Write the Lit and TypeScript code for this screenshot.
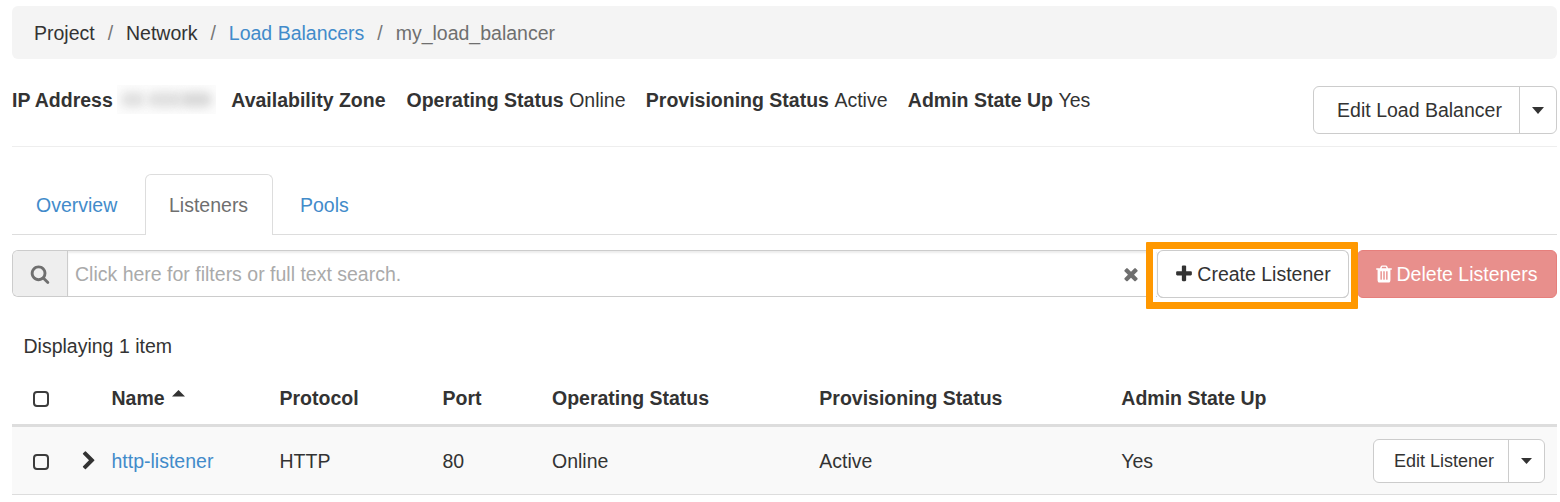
import { LitElement, html, css, svg } from "lit";
import { customElement, property } from "lit/decorators.js";

const ICONS: Record<string, string> = {
  search:
    "M1216 832q0-185-131.5-316.5t-316.5-131.5-316.5 131.5-131.5 316.5 131.5 316.5 316.5 131.5 316.5-131.5 131.5-316.5zm512 832q0 52-38 90t-90 38q-54 0-90-38l-343-342q-179 124-399 124-143 0-273.5-55.5t-225-150-150-225-55.5-273.5 55.5-273.5 150-225 225-150 273.5-55.5 273.5 55.5 225 150 150 225 55.5 273.5q0 220-124 399l343 343q37 37 37 90z",
  times:
    "M1490 1322q0 40-28 68l-136 136q-28 28-68 28t-68-28l-294-294-294 294q-28 28-68 28t-68-28l-136-136q-28-28-28-68t28-68l294-294-294-294q-28-28-28-68t28-68l136-136q28-28 68-28t68 28l294 294 294-294q28-28 68-28t68 28l136 136q28 28 28 68t-28 68l-294 294 294 294q28 28 28 68z",
  plus:
    "M1600 736v192q0 40-28 68t-68 28h-416v416q0 40-28 68t-68 28h-192q-40 0-68-28t-28-68v-416h-416q-40 0-68-28t-28-68v-192q0-40 28-68t68-28h416v-416q0-40 28-68t68-28h192q40 0 68 28t28 68v416h416q40 0 68 28t28 68z",
  trash:
    "M704 1376v-704q0-14-9-23t-23-9h-64q-14 0-23 9t-9 23v704q0 14 9 23t23 9h64q14 0 23-9t9-23zm256 0v-704q0-14-9-23t-23-9h-64q-14 0-23 9t-9 23v704q0 14 9 23t23 9h64q14 0 23-9t9-23zm256 0v-704q0-14-9-23t-23-9h-64q-14 0-23 9t-9 23v704q0 14 9 23t23 9h64q14 0 23-9t9-23zm-544-992h448l-48-117q-7-9-17-11h-317q-10 2-17 11zm928 32v64q0 14-9 23t-23 9h-96v948q0 83-47 143.5t-113 60.5h-832q-66 0-113-58.5t-47-141.5v-952h-96q-14 0-23-9t-9-23v-64q0-14 9-23t23-9h309l70-167q15-37 54-63t79-26h320q40 0 79 26t54 63l70 167h309q14 0 23 9t9 23z",
  chevron:
    "M1363 877l-742 742q-19 19-45 19t-45-19l-166-166q-19-19-19-45t19-45l531-531-531-531q-19-19-19-45t19-45l166-166q19-19 45-19t45 19l742 742q19 19 19 45t-19 45z",
};

@customElement("fa-icon")
export class FaIcon extends LitElement {
  @property() name = "search";
  static styles = css`
    :host { display: block; flex: none; width: 20px; height: 20px; }
    svg { display: block; width: 100%; height: 100%; }
  `;
  render() {
    return html`<svg viewBox="0 0 1792 1792" fill="currentColor">${svg`<path d=${ICONS[this.name]}></path>`}</svg>`;
  }
}

@customElement("split-button")
export class SplitButton extends LitElement {
  @property() label = "";
  static styles = css`
    :host { display: flex; box-sizing: border-box; border: 1px solid #ccc; border-radius: 6px; background: #fff; color: #333; }
    .label { flex: 1; display: flex; align-items: center; justify-content: center; white-space: nowrap; padding-left: var(--shift, 6px); }
    .toggle { box-sizing: border-box; width: var(--toggle, 37px); border-left: 1px solid #ccc; display: flex; align-items: center; justify-content: center; }
    svg { display: block; width: var(--caret, 12px); height: var(--caret-h, 7px); }
  `;
  render() {
    return html`
      <span class="label">${this.label}</span>
      <span class="toggle"><svg viewBox="0 0 12 6" preserveAspectRatio="none"><path d="M0 0h12l-6 6z" fill="#333"></path></svg></span>
    `;
  }
}

@customElement("app-root")
export class AppRoot extends LitElement {
  static styles = css`
    :host {
      display: block; box-sizing: border-box; width: 1560px; height: 502px; overflow: hidden;
      padding: 6px 3px 0 12px; background: #fff; color: #333;
      font: 19.5px/28px "Liberation Sans", Arial, sans-serif;
    }
    .crumbs { display: flex; align-items: center; height: 53px; box-sizing: border-box; padding: 0 22px 0; background: #f4f4f4; border-radius: 6px; white-space: pre; }
    .sep { color: #777; width: 31.3px; text-align: center; }
    .link { color: #428bca; }
    .muted { color: #6f6f6f; }
    .details { display: flex; justify-content: space-between; height: 88px; box-sizing: border-box; border-bottom: 1px solid #eee; padding-top: 27px; }
    .facts { display: flex; white-space: nowrap; height: 28px; }
    .fact { display: flex; gap: 5.5px; margin-right: 20.3px; }
    .masked { display: flex; align-items: center; width: 99px; height: 29px; margin-top: -1px; box-sizing: border-box; padding-left: 4px; overflow: hidden; background: #fcfcfc; }
    .ip { margin-right: 15px; gap: 4.5px; }
    .zone { margin-right: 21px; }
    .smudge { height: 15px; border-radius: 7px; background: #dfdfdf; filter: blur(5px); }
    .s1 { width: 24px; }
    .s2 { width: 36px; margin-left: 2px; }
    .s3 { width: 32px; margin-left: -3px; background: #d8d8d8; }
    b { font-weight: 700; }
    .edit-lb { width: 244px; height: 48px; --toggle: 37px; --shift: 6px; }
    .tabs { display: flex; height: 61px; margin-top: 27px; box-sizing: border-box; border-bottom: 1px solid #ddd; }
    .tab { box-sizing: border-box; height: 61px; padding: 1px 24px 0; display: flex; align-items: center; border: 0 solid #ddd; }
    .first { width: 133px; }
    .active { width: 128px; padding: 0 23px; color: #6f6f6f; background: #fff; border-width: 1px 1px 0; border-radius: 6px 6px 0 0; }
    .third { padding-left: 27px; }
    .toolbar { display: flex; height: 48px; margin-top: 15px; }
    .search { display: flex; width: 1145px; height: 47px; box-sizing: border-box; border: 1px solid #ccc; border-right: 0; border-radius: 6px 0 0 6px; overflow: hidden; }
    .addon { display: flex; align-items: center; justify-content: center; width: 55px; box-sizing: border-box; border-right: 1px solid #ccc; background: #eee; color: #6f6f6f; }
    .field { flex: 1; display: flex; align-items: center; justify-content: space-between; padding: 0 16px 0 7px; color: #aaa; box-shadow: inset 0 2px 2px rgba(0,0,0,.075); }
    .field fa-icon { color: #6f6f6f; }
    .btn { display: flex; align-items: center; justify-content: center; gap: 3px; box-sizing: border-box; height: 48px; border: 1px solid #ccc; border-radius: 6px; white-space: nowrap; }
    .create { position: relative; width: 192px; background: #fff; padding-right: 1px; }
    .ring { position: absolute; left: -12px; top: -9px; width: 212px; height: 67px; box-sizing: border-box; border: 7px solid #ff9800; border-radius: 1px; box-shadow: inset 0 0 0 3px #fff; }
    .create::before { content: ""; position: absolute; inset: -1px; box-sizing: border-box; border: 1px solid #ccc; border-radius: 6px; z-index: 1; }
    .delete { width: 200px; margin-left: 8px; padding-right: 3px; color: #fff; background: #e88f8c; border-color: #e67f7c; }
    .count { padding: 34px 0 0 11.5px; }
    .row { display: grid; grid-template-columns: 66px 33.5px 168px 163px 109.500px 267.300px 302px 1fr; align-items: center; box-sizing: border-box; }
    .head { height: 67px; padding-top: 12px; border-bottom: 3px solid #ddd; font-weight: 700; }
    .body { height: 68px; background: #f9f9f9; border-bottom: 1px solid #ddd; }
    .box { width: 16px; height: 16px; margin: 2px 0 0 21px; box-sizing: border-box; border: 2px solid #3c3c3c; border-radius: 4px; }
    .name { display: flex; gap: 7px; }
    .name svg { width: 13px; height: 7px; margin-top: 6px; }
    .last { display: flex; justify-content: space-between; align-items: center; padding-right: 12px; }
    .edit-l { width: 172px; height: 44px; font-size: 18px; --toggle: 36px; --shift: 6px; --caret: 11px; --caret-h: 6px; }
    .chev { margin-left: 1px; }
  `;

  private heads = ["Protocol", "Port", "Operating Status", "Provisioning Status", "Admin State Up"];
  private values = ["HTTP", "80", "Online", "Active"];
  private facts = [
    ["Operating Status", "Online"],
    ["Provisioning Status", "Active"],
    ["Admin State Up", "Yes"],
  ];

  render() {
    return html`
      <nav class="crumbs">
        <span>Project</span><span class="sep">/</span><span>Network</span><span class="sep">/</span><span class="link">Load Balancers</span><span class="sep">/</span><span class="muted">my_load_balancer</span>
      </nav>
      <section class="details">
        <div class="facts">
          <div class="fact ip"><b>IP Address</b><span class="masked"><i class="smudge s1"></i><i class="smudge s2"></i><i class="smudge s3"></i></span></div>
          <div class="fact zone"><b>Availability Zone</b></div>
          ${this.facts.map(([k, v]) => html`<div class="fact"><b>${k}</b><span>${v}</span></div>`)}
        </div>
        <split-button class="edit-lb" label="Edit Load Balancer"></split-button>
      </section>
      <nav class="tabs">
        <span class="tab first link">Overview</span>
        <span class="tab active">Listeners</span>
        <span class="tab third link">Pools</span>
      </nav>
      <section class="toolbar">
        <div class="search">
          <span class="addon"><fa-icon name="search"></fa-icon></span>
          <span class="field"><span>Click here for filters or full text search.</span><fa-icon name="times"></fa-icon></span>
        </div>
        <div class="btn create"><span class="ring"></span><fa-icon name="plus"></fa-icon><span>Create Listener</span></div>
        <div class="btn delete"><fa-icon name="trash"></fa-icon><span>Delete Listeners</span></div>
      </section>
      <div class="count">Displaying 1 item</div>
      <section>
        <div class="row head">
          <span class="box"></span><span></span>
          <span class="name">Name <svg viewBox="0 0 13 7"><path d="M0 6.500h13L6.500 0z" fill="#333"></path></svg></span>
          ${this.heads.map((h) => html`<span>${h}</span>`)}
        </div>
        <div class="row body">
          <span class="box"></span><fa-icon class="chev" name="chevron"></fa-icon><span class="link">http-listener</span>
          ${this.values.map((v) => html`<span>${v}</span>`)}
          <span class="last"><span>Yes</span><split-button class="edit-l" label="Edit Listener"></split-button></span>
        </div>
      </section>
    `;
  }
}
